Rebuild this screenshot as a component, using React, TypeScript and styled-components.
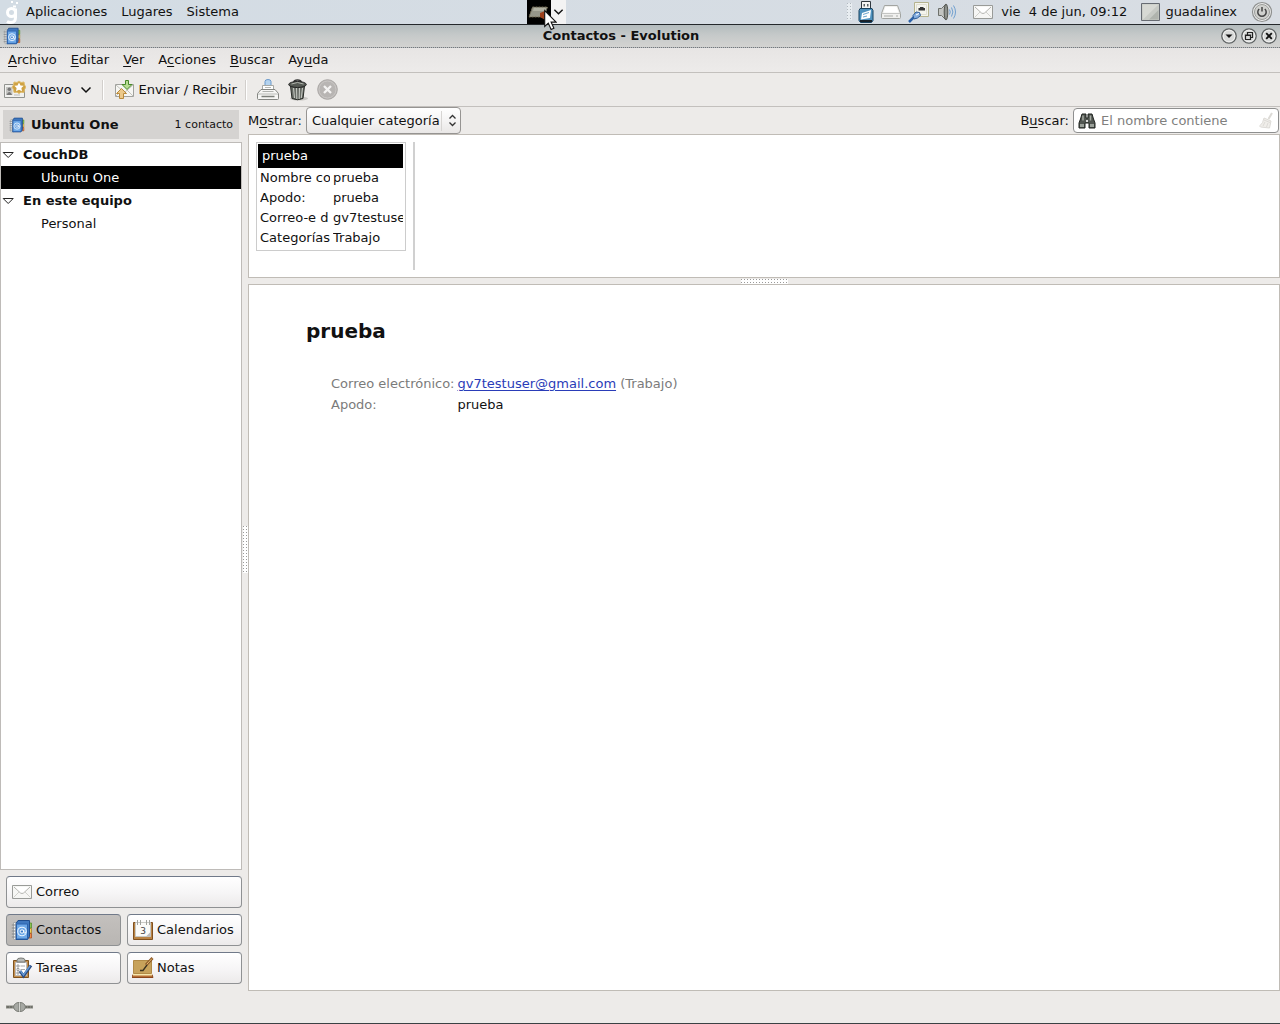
import React from "react";
import styled, { createGlobalStyle, css } from "styled-components";

const GlobalStyle = createGlobalStyle`
  * { box-sizing: border-box; }
  body { margin: 0; background: #edebe9; }
  body, button, input, select {
    font-family: "DejaVu Sans", Verdana, sans-serif;
    font-size: 13px;
    line-height: 20px;
    color: #111;
  }
  button { margin: 0; padding: 0; border: 0; background: none; cursor: default; white-space: nowrap; }
  svg { display: block; flex: none; }
  u { text-underline-offset: 2px; text-decoration-thickness: 1px; }
`;

/* ---------- layout ---------- */

const Desktop = styled.div`
  display: flex;
  flex-direction: column;
  min-height: 100vh;
  border-bottom: 1px solid #3a4144;
`;

const Panel = styled.header`
  display: flex;
  justify-content: space-between;
  height: 25px;
  background: linear-gradient(90deg, #d3dce4, #d8dde3);
  border-bottom: 1px solid #24282b;
`;

const PanelMenus = styled.nav`
  display: flex;
  align-items: center;
  padding: 0 0 1px 5px;
`;

const MenuButton = styled.button`
  padding: 0 7px;
`;

const Applet = styled.div`
  position: relative;
  display: flex;
  width: 39px;
  height: 24px;
`;

const AppletIcon = styled.button`
  width: 24px;
  background: #000;
`;

const AppletArrow = styled.button`
  display: grid;
  place-items: center;
  width: 15px;
  background: #f3f3f3;
`;

const Pointer = styled.span`
  position: absolute;
  left: 17px;
  top: 9px;
  z-index: 2;
  pointer-events: none;
`;

const Tray = styled.div`
  display: flex;
  align-items: center;
  gap: 7px;
  padding: 0 7px 1px 0;
`;

const TrayButton = styled.button<{ $gap?: number }>`
  display: flex;
  align-items: center;
  gap: 5px;
  height: 22px;
  margin-left: ${(p) => p.$gap ?? 0}px;
`;

const grip = css`
  background-image: linear-gradient(transparent 1px, #fff 1px), linear-gradient(90deg, #999 1px, #fff 1px);
  background-size: 3px 3px;
`;

const TrayGrip = styled.i`
  width: 5px;
  height: 17px;
  background-image: linear-gradient(transparent 1px, #e8edf1 1px), linear-gradient(90deg, #b0b8be 1px, #e8edf1 1px);
  background-size: 3px 3px;
`;

const TitleBar = styled.div`
  display: flex;
  align-items: center;
  height: 23px;
  padding: 0 3px;
  background: linear-gradient(#b3bbbd, #c5c9c9 45%, #d3d3d1);
  border-bottom: 1px dotted #77787c;
`;

const WindowTitle = styled.h1`
  flex: 1;
  margin: 0;
  text-align: center;
  font-size: 13px;
  font-weight: bold;
  line-height: 20px;
`;

const WindowButtons = styled.div`
  display: flex;
  gap: 4px;
`;

const MenuBar = styled.nav`
  display: flex;
  align-items: center;
  height: 25px;
  padding: 0 1px;
  background: linear-gradient(#e7e5e4, #edebea);
  border-bottom: 1px solid #c3c0bd;
`;

const ToolBar = styled.div`
  display: flex;
  align-items: center;
  height: 34px;
  padding: 0 4px;
  border-bottom: 1px solid #c3c0bd;
`;

const ToolButton = styled.button<{ $space?: number }>`
  display: flex;
  align-items: center;
  gap: 4px;
  margin-right: ${(p) => p.$space ?? 8}px;
`;

const ToolSeparator = styled.i`
  width: 2px;
  height: 20px;
  margin-right: 10px;
  border-left: 1px solid #d2cfcc;
  border-right: 1px solid #fff;
`;

const Workspace = styled.div`
  flex: 1;
  display: flex;
`;

const Sidebar = styled.aside`
  display: flex;
  flex-direction: column;
  flex: 0 0 242px;
  padding-bottom: 7px;
`;

const SourceHeader = styled.header`
  display: flex;
  align-items: center;
  gap: 6px;
  height: 29px;
  margin: 3px;
  padding: 0 6px;
  background: #d5d3d1;
`;

const SourceName = styled.h2`
  flex: 1;
  margin: 0;
  font-size: 13px;
  line-height: 20px;
`;

const SourceCount = styled.span`
  font-size: 11px;
`;

const Tree = styled.ul`
  flex: 1;
  margin: 0;
  padding: 0;
  list-style: none;
  background: #fff;
  border: 1px solid #bebbb8;
`;

const TreeGroup = styled.li`
  ul { margin: 0; padding: 0; list-style: none; }
`;

const TreeHead = styled.button`
  display: flex;
  align-items: center;
  gap: 8px;
  width: 100%;
  height: 23px;
  padding-left: 1px;
  font-weight: bold;
`;

const TreeItem = styled.button<{ $selected?: boolean }>`
  display: block;
  width: 100%;
  height: 23px;
  padding-left: 40px;
  text-align: left;
  color: ${(p) => (p.$selected ? "#fff" : "#111")};
  background: ${(p) => (p.$selected ? "#000" : "transparent")};
`;

const Switcher = styled.nav`
  display: grid;
  grid-template-columns: 1fr 1fr;
  gap: 6px;
  padding: 6px 0 0 6px;
`;

const SwitchButton = styled.button<{ $active?: boolean; $wide?: boolean }>`
  display: flex;
  align-items: center;
  gap: 3px;
  height: 32px;
  padding: 0 4px;
  grid-column: ${(p) => (p.$wide ? "1 / -1" : "auto")};
  border: 1px solid #8f9193;
  border-top-color: #707989;
  border-radius: 4px;
  background: ${(p) => (p.$active ? "linear-gradient(#c3c0bd, #b9b6b3)" : "linear-gradient(#fff, #f7f6f7 50%, #eceaea)")};
`;

const VerticalSash = styled.div`
  display: grid;
  place-items: center;
  flex: 0 0 6px;
  i { width: 5px; height: 47px; ${grip} }
`;

const HorizontalSash = styled.div`
  display: grid;
  place-items: center;
  height: 6px;
  i { width: 47px; height: 5px; ${grip} }
`;

const Main = styled.main`
  flex: 1;
  display: flex;
  flex-direction: column;
  min-width: 0;
`;

const FilterBar = styled.div`
  display: flex;
  align-items: center;
  justify-content: space-between;
  height: 27px;
  padding-right: 1px;
`;

const Field = styled.div`
  display: flex;
  align-items: center;
  gap: 4px;
`;

const SelectBox = styled.div`
  position: relative;
  select {
    appearance: none;
    display: block;
    width: 155px;
    height: 27px;
    padding: 0 20px 0 5px;
    border: 1px solid #969492;
    border-radius: 4px;
    background: linear-gradient(#fff, #f5f4f4 50%, #e9e7e6);
  }
  svg { position: absolute; right: 2px; top: 4px; pointer-events: none; }
`;

const SearchBox = styled.div`
  display: flex;
  align-items: center;
  gap: 5px;
  width: 206px;
  height: 25px;
  padding: 0 4px;
  border: 1px solid #8e8f8f;
  border-radius: 4px;
  background: #fff;
  input {
    flex: 1;
    min-width: 0;
    padding: 0;
    border: 0;
    outline: 0;
    background: none;
  }
  input::placeholder { color: #80807e; opacity: 1; }
`;

const CardView = styled.section`
  display: flex;
  gap: 7px;
  height: 144px;
  padding: 7px;
  background: #fff;
  border: 1px solid #c0bcb6;
`;

const Card = styled.article`
  align-self: flex-start;
  width: 150px;
  padding: 1px 2px 2px 1px;
  border: 1px solid #ccc;
`;

const CardTitle = styled.h3`
  margin: 0;
  padding: 2px 4px;
  font-size: 13px;
  font-weight: normal;
  line-height: 20px;
  color: #fff;
  background: #000;
`;

const CardFields = styled.dl`
  display: grid;
  grid-template-columns: 70px 1fr;
  column-gap: 3px;
  margin: 0;
  padding-left: 2px;
  dt, dd { margin: 0; overflow: hidden; white-space: nowrap; }
`;

const ColumnRule = styled.i`
  width: 2px;
  background: #d0d0d0;
`;

const Preview = styled.section`
  flex: 1;
  padding: 34px 57px;
  background: #fff;
  border: 1px solid #c0bcb6;
`;

const PreviewName = styled.h2`
  margin: 0 0 31px;
  font-size: 20px;
  line-height: 24px;
`;

const Details = styled.table`
  margin-left: 25px;
  border-collapse: collapse;
  color: #7b7b7b;
  th, td { height: 21px; padding: 0; font-weight: normal; text-align: left; vertical-align: top; }
  th { padding-right: 3px; }
  a { color: #2a3cb8; text-underline-offset: 2px; }
`;

const Strong = styled.span`
  color: #111;
`;

const StatusBar = styled.footer`
  display: flex;
  align-items: center;
  height: 32px;
  padding-left: 6px;
`;

/* ---------- icons ---------- */

const Book = ({ size = 18 }: { size?: number }) => (
  <svg width={size} height={size} viewBox="0 0 22 22">
    <path d="M18 4h2.500v5H18z" fill="#8ac152" stroke="#4a8a22" strokeWidth=".7" />
    <path d="M18 9.500h2.500v4.500H18z" fill="#f3d060" stroke="#a27a1d" strokeWidth=".7" />
    <path d="M18 14.500h2.500v4.500H18z" fill="#ee8a4a" stroke="#a94514" strokeWidth=".7" />
    <path d="M2.500 3.500h4v17h-4z" fill="#f5f5f2" stroke="#a7a9aa" />
    <path d="M5 4.500 7 1.500h11.500v16l-2 3H5z" fill="#3f78bf" stroke="#1e4c8c" />
    <path d="M5.500 5h11v15h-11z" fill="#6ea9e8" stroke="#2b62ad" />
    <circle cx="11" cy="12.500" r="4.300" fill="none" stroke="#e9f4ff" strokeWidth="1.100" />
    <circle cx="11" cy="12.500" r="1.700" fill="#397bc9" stroke="#fff" />
    <path d="M12.700 11v2.500q1 1.200 2.200-.5" fill="none" stroke="#fff" />
    <path d="M.8 6h4M.8 9h4M.8 12h4M.8 15h4M.8 18h4" stroke="#84878a" />
  </svg>
);

const Envelope = () => (
  <svg width="22" height="20" viewBox="0 0 22 20">
    <path d="M1.500 3.500h19v13h-19z" fill="#f6f6f4" stroke="#999b98" />
    <path d="m2.500 15.500 6-6M19.500 15.500l-6-6" stroke="#d0d0cc" />
    <path d="m3 5 6.500 6q1.500 1 3 0L19 5" fill="#fff" stroke="#b4b4b0" />
  </svg>
);

const Logo = () => (
  <svg width="14" height="24" viewBox="0 0 14 24">
    <path d="M10.500 8.500v9q0 5-4.500 5-2.500 0-4-1" fill="none" stroke="#fff" strokeWidth="3" />
    <circle cx="6.500" cy="12.500" r="4" fill="none" stroke="#fff" strokeWidth="3" />
    <path d="M8 5.500h3v2H8zM11 2h2v2h-2zM6 1h2v2H6z" fill="#fff" />
  </svg>
);

const Chevron = ({ size = 12 }: { size?: number }) => (
  <svg width={size} height="8" viewBox="0 0 12 8">
    <path d="m1.500 1.500 4.500 4.500 4.500-4.500" fill="none" stroke="#111" strokeWidth="1.500" />
  </svg>
);

const Tablet = () => (
  <svg width="24" height="24" viewBox="0 0 24 24">
    <path d="M5.500 7h15l-3.500 10H2z" fill="#96968a" stroke="#706850" strokeDasharray="2 1" />
    <path d="M7 8h12l-1 3H6z" fill="#b0b0a2" />
    <path d="m13 13 5-2 2 10-7-4z" fill="#9d401c" />
  </svg>
);

const Arrow = () => (
  <svg width="13" height="22" viewBox="0 0 13 22">
    <path d="M.7 1.500v16l3.600-3.400 2.800 6.400 2.800-1.200-2.800-6.200h5z" fill="#fff" stroke="#111" strokeWidth="1.100" />
  </svg>
);

const Usb = () => (
  <svg width="16" height="22" viewBox="0 0 16 22">
    <path d="M3.500.5h9v8h-9z" fill="#f4f4f4" stroke="#30383f" />
    <path d="M5.500 3h1.500v2.500H5.500zM9 3h1.500v2.500H9z" fill="#5a6266" />
    <path d="M2 7.500h12l1 2v10l-1.500 2h-11L1 19.500v-10z" fill="#4f92bf" stroke="#19425f" />
    <path d="m4 12 9-3-1 8-9 1.500z" fill="#fff" />
    <path d="M5 13.500l6-2M5 16l4-1" stroke="#69a3cb" />
    <path d="M2 19h12v2H2z" fill="#18222b" />
  </svg>
);

const Disk = () => (
  <svg width="20" height="20" viewBox="0 0 20 20">
    <path d="m3.500 3.500-3 8v4q0 1 1 1h17q1 0 1-1v-4l-3-8z" fill="#f0f0ee" stroke="#a2a4a1" />
    <path d="M1 11.500h18" stroke="#c4c5c3" />
    <path d="m4.500 5-2 5.500h15l-2-5.500z" fill="#fff" />
    <path d="M3 14h9M15 14h2" stroke="#a9aba8" />
  </svg>
);

const Network = () => (
  <svg width="22" height="22" viewBox="0 0 22 22">
    <path d="M6.500 1.500h14v14h-14z" fill="#f4f4ed" stroke="#b5b38e" />
    <path d="M8.500 3.500h10v10h-10z" fill="none" stroke="#e0dfd2" />
    <path d="M10.500 9.500V7H12V6h3.500v1H17v2.500z" fill="#333" />
    <path d="m1 21 5-5" stroke="#2d62a8" strokeWidth="2.500" />
    <path d="m5 14.500 3-3.500 3.500.5 1 3-3 2.500-3.500 1z" fill="#85aee0" stroke="#2c5b98" />
    <path d="m8 14 3-1.500" stroke="#fff" />
  </svg>
);

const Speaker = () => (
  <svg width="20" height="20" viewBox="0 0 20 20">
    <path d="M1.500 6.500h3l4-4v15l-4-4h-3z" fill="#c3c5c2" stroke="#6d706b" />
    <ellipse cx="9" cy="10" rx="1.800" ry="8" fill="#8f928d" stroke="#50534e" />
    <path d="M12.500 7.500q1.500 2.500 0 5M14.500 5.500q2.800 4.500 0 9M16.500 3.500q4 6.500 0 13" fill="none" stroke="#6f9fcf" />
  </svg>
);

const UserSquare = () => (
  <svg width="19" height="20" viewBox="0 0 19 20">
    <path d="M.5 1.500h18v17H.5z" fill="#c7cac5" stroke="#666b72" />
    <path d="M1.500 2.500h16L2 17.500z" fill="#d7d9d4" />
    <path d="M17.500 8v9.500H8z" fill="#afb3ad" />
  </svg>
);

const Power = () => (
  <svg width="22" height="22" viewBox="0 0 22 22">
    <circle cx="11" cy="11" r="9.500" fill="#eee" stroke="#8e908f" strokeWidth="1.200" />
    <circle cx="11" cy="11" r="7.500" fill="#d0d1ce" stroke="#9b9d9a" />
    <path d="M8.200 8a4.200 4.200 0 1 0 5.600 0M11 6v4.500" fill="none" stroke="#444" strokeWidth="1.500" />
  </svg>
);

const WindowIcon = ({ kind }: { kind: "min" | "max" | "close" }) => (
  <svg width="16" height="16" viewBox="0 0 16 16">
    <circle cx="8" cy="8" r="7.200" fill="#d9dbda" stroke="#5b5f60" strokeWidth="1.300" />
    <circle cx="8" cy="8" r="5.800" fill="none" stroke="#f0f0ef" />
    {kind === "min" && <path d="M4.500 6.500h7L8 10z" fill="#111" />}
    {kind === "max" && (
      <path d="M6.500 7V4.500h5v5H9.500M4.500 7h5v4.500h-5zM4.500 7.500h5" fill="none" stroke="#222" strokeWidth="1.200" />
    )}
    {kind === "close" && <path d="m5.200 5.200 5.600 5.600M10.800 5.200l-5.600 5.600" stroke="#111" strokeWidth="1.900" />}
  </svg>
);

const NewContact = () => (
  <svg width="22" height="20" viewBox="0 0 22 20">
    <path d="M.5 4.500h20v13H.5z" fill="#f1f1ef" stroke="#91938f" />
    <path d="M2 7h6.500v8H2z" fill="#c4c4c1" />
    <circle cx="5.300" cy="9.200" r="1.700" fill="#777" />
    <path d="M2.500 15q2.800-6 5.600 0z" fill="#777" />
    <path d="M10 15h6" stroke="#bbb" />
    <path d="m15 1 2 1.500 3-.5.5 3 1.500 2-1.500 2.500-.5 3-3-.3-2 1.300-2-1.300-3 .3-.5-3L8 7l1.500-2 .5-3 3 .5z" fill="#cfa243" stroke="#dfbd6e" />
    <path d="m15 2.500 1.500 2.900 3.200.4-2.300 2.200.6 3.200-3-1.500-3 1.500.6-3.200-2.300-2.200 3.200-.4z" fill="#fff" />
  </svg>
);

const SendReceive = () => (
  <svg width="21" height="20" viewBox="0 0 21 20">
    <path d="M1.500 4.500h18v12h-18z" fill="#f6f6f3" stroke="#a1a29e" />
    <path d="m2 5 8.500 7.500L19 5M2 16l6-6M19 16l-6-6" fill="none" stroke="#c3c3bd" />
    <path d="M11.500.5h3v4h3.500l-5 5-5-5h3.500z" fill="#b7dc92" stroke="#48882a" />
    <path d="m7.500 8.500 5 5H9.500v5h-4v-5h-3z" fill="#ecc98a" stroke="#b98a3c" />
  </svg>
);

const Printer = () => (
  <svg width="22" height="22" viewBox="0 0 22 22">
    <path d="M8 6V2.500q0-2 3-2t3 2V6" fill="#b4d3ef" stroke="#6c9acb" />
    <path d="M5.500 6.500h11v5h-11z" fill="#fff" stroke="#a6a8a4" />
    <path d="M8 8.500h6" stroke="#b7b9b5" />
    <path d="M4 10.500h14l3.500 4v5q0 1-1 1h-19q-1 0-1-1v-5z" fill="#f6f6f4" stroke="#858783" />
    <path d="M1 15h20" stroke="#babcb8" />
    <path d="M4.500 17.500h13" stroke="#7d807b" strokeWidth="1.500" />
    <path d="M5.500 12.500h11" stroke="#b0b2ae" />
  </svg>
);

const Trash = () => (
  <svg width="22" height="22" viewBox="0 0 22 22">
    <ellipse cx="12" cy="19.500" rx="9" ry="2" fill="#c9c7c4" />
    <path d="M3.500 7h14l-1.500 12.500q-5.500 2.500-11 0z" fill="#686c66" stroke="#292c28" />
    <path d="m6.500 9 1 10M9.500 9l.3 11M12.500 9l-.3 11M15.500 9l-1.200 10" stroke="#c7cac4" />
    <path d="M7 3q0-2 3.500-2t3.500 2" fill="none" stroke="#333" strokeWidth="1.500" />
    <ellipse cx="10.500" cy="5.500" rx="8.800" ry="3" fill="#555953" stroke="#222" />
    <path d="M4.500 5q6-3 12 0" fill="none" stroke="#b0b4ad" />
  </svg>
);

const Stop = () => (
  <svg width="21" height="21" viewBox="0 0 21 21">
    <circle cx="10.500" cy="10.500" r="9.800" fill="#b8b5b3" stroke="#aaa7a5" />
    <circle cx="10.500" cy="10.500" r="8.500" fill="none" stroke="#cac7c5" />
    <path d="m7 7 7 7M14 7l-7 7" stroke="#f4f3f2" strokeWidth="2.300" />
  </svg>
);

const Expander = () => (
  <svg width="13" height="12" viewBox="0 0 13 12">
    <path d="M1.200 3.500h10L6.200 8.500z" fill="#fff" stroke="#222" />
  </svg>
);

const SelectArrows = () => (
  <svg width="18" height="20" viewBox="0 0 18 20">
    <path d="M.5 0v20" stroke="#d7d5d3" />
    <path d="m8.500 7.500 3-3 3 3M8.500 11.500l3 3 3-3" fill="none" stroke="#333" strokeWidth="1.300" />
  </svg>
);

const Binoculars = () => (
  <svg width="18" height="18" viewBox="0 0 18 18">
    <path d="M4 2h4v4h2V2h4l1.500 5 1.500 4v5h-6v-5H7v5H1v-5l1.500-4z" fill="#515651" stroke="#202420" />
    <path d="M5 3.500v5M12.500 3.500v5" stroke="#a5aaa3" strokeWidth="1.500" />
    <path d="M2 12h4v3H2zM12 12h4v3h-4z" fill="#9ba19a" />
    <path d="M8 8h2v2H8z" fill="#ddd" />
  </svg>
);

const Broom = () => (
  <svg width="16" height="18" viewBox="0 0 16 18">
    <path d="m10.500 7 3.500-6" stroke="#dcdad6" strokeWidth="2" />
    <path d="m6 6 7 3-1.500 7-9-1q-1-.5-.5-1.500 3-2 4-7.500z" fill="#f0eeea" stroke="#dddbd7" />
    <path d="m6 8 6 2.500M5 14l2-4M8.500 15l1.500-4" stroke="#dddbd7" />
  </svg>
);

const Calendar = () => (
  <svg width="22" height="22" viewBox="0 0 22 22">
    <path d="M1.500 3.500h19v17h-19z" fill="#b98344" stroke="#80501f" />
    <path d="M3.500 3.500h15v14h-15z" fill="#fafaf8" stroke="#c9c9c5" />
    <path d="M5.500 1v5M8.500 1v5M14.500 1v5M17.500 1v5" stroke="#a0a29e" />
    <text x="11" y="15" textAnchor="middle" fontSize="9" fontFamily="DejaVu Sans" fill="#444">3</text>
    <path d="m14 17.500 4.500-4.500v4.500z" fill="#bbb" />
  </svg>
);

const Tasks = () => (
  <svg width="22" height="22" viewBox="0 0 22 22">
    <path d="M2.500 3.500h15v17h-15z" fill="#c38f50" stroke="#80541f" />
    <path d="M4.500 5.500h11v13h-11z" fill="#fff" stroke="#bbb" />
    <path d="M6 5V3q0-2 4-2t4 2v2z" fill="#b9bbb8" stroke="#797b77" />
    <path d="M6 8h2v2H6zM6 11.500h2v2H6zM6 15h2v2H6z" fill="none" stroke="#888" strokeWidth=".8" />
    <path d="M9.500 9H14M9.500 12.500H14" stroke="#aaa" />
    <path d="m9 14 3.500 5L20 8.500" fill="none" stroke="#284b83" strokeWidth="3" />
    <path d="m9.500 14 3 4L19 9" fill="none" stroke="#6397d3" strokeWidth="1.500" />
  </svg>
);

const Notes = () => (
  <svg width="22" height="22" viewBox="0 0 22 22">
    <path d="M1 17.500h19l1 3H0z" fill="#b66c35" stroke="#8a471b" />
    <path d="M1 16.500h19v2H1z" fill="#f6e7ac" />
    <path d="M1.500 3.500h18v13h-18z" fill="#c7a25b" stroke="#b18a46" />
    <path d="m14 8 6.500-7" stroke="#8b5526" strokeWidth="2.800" />
    <path d="m14.500 7.500 5.500-6" stroke="#e8c373" />
    <path d="M8 13.500h3L15 8" fill="none" stroke="#3a3220" strokeWidth="1.300" />
  </svg>
);

const Plug = () => (
  <svg width="27" height="12" viewBox="0 0 27 12">
    <path d="M0 6h27" stroke="#85867e" strokeWidth="3" />
    <path d="M1 6h25" stroke="#5a5b56" strokeDasharray="2 1" />
    <path d="M13 1.500q-4.500 0-5.500 4.500 1 4.500 5.500 4.500zM14 1.500q4.500 0 5.500 4.500-1 4.500-5.500 4.500z" fill="#a6a8a3" stroke="#7b7d77" />
    <path d="M13.500 2v8" stroke="#d5d6d2" />
  </svg>
);

/* ---------- data ---------- */

const menus: [string, string, string][] = [
  ["", "A", "rchivo"],
  ["", "E", "ditar"],
  ["", "V", "er"],
  ["A", "c", "ciones"],
  ["", "B", "uscar"],
  ["Ay", "u", "da"],
];

const cardFields = [
  ["Nombre co", "prueba"],
  ["Apodo:", "prueba"],
  ["Correo-e d", "gv7testuse"],
  ["Categorías", "Trabajo"],
];

export default function App() {
  return (
    <>
      <GlobalStyle />
      <Desktop>
        <Panel>
          <PanelMenus>
            <Logo />
            {["Aplicaciones", "Lugares", "Sistema"].map((name) => (
              <MenuButton key={name}>{name}</MenuButton>
            ))}
          </PanelMenus>
          <Applet>
            <AppletIcon aria-label="Tableta"><Tablet /></AppletIcon>
            <AppletArrow aria-label="Opciones"><Chevron size={11} /></AppletArrow>
            <Pointer><Arrow /></Pointer>
          </Applet>
          <Tray>
            <TrayGrip />
            <TrayButton aria-label="USB" $gap={-1}><Usb /></TrayButton>
            <TrayButton aria-label="Disco"><Disk /></TrayButton>
            <TrayButton aria-label="Red"><Network /></TrayButton>
            <TrayButton aria-label="Volumen"><Speaker /></TrayButton>
            <TrayButton aria-label="Mensajes" $gap={8}><Envelope /></TrayButton>
            <TrayButton>vie &nbsp;4 de jun, 09:12</TrayButton>
            <TrayButton $gap={7}><UserSquare />guadalinex</TrayButton>
            <TrayButton aria-label="Apagar" $gap={7}><Power /></TrayButton>
          </Tray>
        </Panel>

        <TitleBar>
          <Book />
          <WindowTitle>Contactos - Evolution</WindowTitle>
          <WindowButtons>
            <button aria-label="Minimizar"><WindowIcon kind="min" /></button>
            <button aria-label="Restaurar"><WindowIcon kind="max" /></button>
            <button aria-label="Cerrar"><WindowIcon kind="close" /></button>
          </WindowButtons>
        </TitleBar>

        <MenuBar>
          {menus.map(([before, key, after]) => (
            <MenuButton key={before + key + after}>{before}<u>{key}</u>{after}</MenuButton>
          ))}
        </MenuBar>

        <ToolBar>
          <ToolButton $space={6}><NewContact />Nuevo<Chevron size={20} /></ToolButton>
          <ToolSeparator />
          <ToolButton><SendReceive />Enviar / Recibir</ToolButton>
          <ToolSeparator />
          <ToolButton aria-label="Imprimir"><Printer /></ToolButton>
          <ToolButton aria-label="Borrar"><Trash /></ToolButton>
          <ToolButton aria-label="Detener"><Stop /></ToolButton>
        </ToolBar>

        <Workspace>
          <Sidebar>
            <SourceHeader>
              <Book size={16} />
              <SourceName>Ubuntu One</SourceName>
              <SourceCount>1 contacto</SourceCount>
            </SourceHeader>
            <Tree>
              <TreeGroup>
                <TreeHead><Expander />CouchDB</TreeHead>
                <ul><li><TreeItem $selected>Ubuntu One</TreeItem></li></ul>
              </TreeGroup>
              <TreeGroup>
                <TreeHead><Expander />En este equipo</TreeHead>
                <ul><li><TreeItem>Personal</TreeItem></li></ul>
              </TreeGroup>
            </Tree>
            <Switcher>
              <SwitchButton $wide><Envelope />Correo</SwitchButton>
              <SwitchButton $active><Book size={22} />Contactos</SwitchButton>
              <SwitchButton><Calendar />Calendarios</SwitchButton>
              <SwitchButton><Tasks />Tareas</SwitchButton>
              <SwitchButton><Notes />Notas</SwitchButton>
            </Switcher>
          </Sidebar>
          <VerticalSash><i /></VerticalSash>
          <Main>
            <FilterBar>
              <Field>
                <label htmlFor="category">M<u>o</u>strar:</label>
                <SelectBox>
                  <select id="category"><option>Cualquier categoría</option></select>
                  <SelectArrows />
                </SelectBox>
              </Field>
              <Field>
                <label htmlFor="search">B<u>u</u>scar:</label>
                <SearchBox>
                  <Binoculars />
                  <input id="search" type="text" placeholder="El nombre contiene" />
                  <button aria-label="Limpiar"><Broom /></button>
                </SearchBox>
              </Field>
            </FilterBar>
            <CardView>
              <Card>
                <CardTitle>prueba</CardTitle>
                <CardFields>
                  {cardFields.map(([name, value]) => (
                    <React.Fragment key={name}><dt>{name}</dt><dd>{value}</dd></React.Fragment>
                  ))}
                </CardFields>
              </Card>
              <ColumnRule />
            </CardView>
            <HorizontalSash><i /></HorizontalSash>
            <Preview>
              <PreviewName>prueba</PreviewName>
              <Details>
                <tbody>
                  <tr>
                    <th scope="row">Correo electrónico:</th>
                    <td><a href="mailto:gv7testuser@gmail.com">gv7testuser@gmail.com</a> (Trabajo)</td>
                  </tr>
                  <tr>
                    <th scope="row">Apodo:</th>
                    <td><Strong>prueba</Strong></td>
                  </tr>
                </tbody>
              </Details>
            </Preview>
          </Main>
        </Workspace>

        <StatusBar><Plug /></StatusBar>
      </Desktop>
    </>
  );
}
